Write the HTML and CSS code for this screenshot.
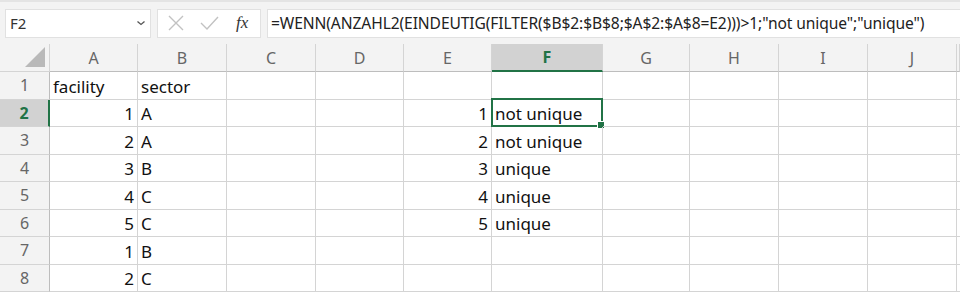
FILE: index.html
```html
<!DOCTYPE html>
<html lang="de">
<head>
  <meta charset="UTF-8">
  <title>Tabelle</title>
  <link rel="stylesheet" href="styles.css">
</head>
<body>

  <div class="toolbar">
    <div class="namebox">
      <span>F2</span>
      <svg class="chevron" width="10" height="6" viewBox="0 0 10 6"><path d="M1.5 1.5 L5 4.5 L8.5 1.5" fill="none" stroke="#555" stroke-width="1.3"/></svg>
    </div>
    <div class="actions">
      <svg width="18" height="18" viewBox="0 0 18 18"><path d="M2 2 L16 16 M16 2 L2 16" stroke="#c2c2c2" stroke-width="1.4"/></svg>
      <svg width="20" height="18" viewBox="0 0 20 18"><path d="M2 9 L8 15 L19 3" fill="none" stroke="#c2c2c2" stroke-width="1.4"/></svg>
      <span class="fx">fx</span>
    </div>
    <div class="formula">=WENN(ANZAHL2(EINDEUTIG(FILTER($B$2:$B$8;$A$2:$A$8=E2)))&gt;1;"not unique";"unique")</div>
  </div>

  <div class="sheet" id="sheet"></div>

  <script>
    const sheet = document.getElementById('sheet');
    const spalten = ['A', 'B', 'C', 'D', 'E', 'F', 'G', 'H', 'I', 'J', ''];

    // Zellinhalte: [Zeile][Spalte] = [Text, rechtsbündig?]
    const daten = {
      1: { A: ['facility'], B: ['sector'] },
      2: { A: ['1', true], B: ['A'], E: ['1', true], F: ['not unique'] },
      3: { A: ['2', true], B: ['A'], E: ['2', true], F: ['not unique'] },
      4: { A: ['3', true], B: ['B'], E: ['3', true], F: ['unique'] },
      5: { A: ['4', true], B: ['C'], E: ['4', true], F: ['unique'] },
      6: { A: ['5', true], B: ['C'], E: ['5', true], F: ['unique'] },
      7: { A: ['1', true], B: ['B'] },
      8: { A: ['2', true], B: ['C'] }
    };

    function zelle(klasse, text) {
      const d = document.createElement('div');
      d.className = klasse;
      if (text) d.textContent = text;
      sheet.appendChild(d);
      return d;
    }

    // Kopfzeile
    zelle('corner');
    spalten.forEach(s => zelle(s === 'F' ? 'colhead aktiv' : 'colhead', s));

    for (let r = 1; r <= 8; r++) {
      zelle(r === 2 ? 'rowhead aktiv' : 'rowhead', String(r));
      spalten.forEach(s => {
        const wert = daten[r] && daten[r][s];
        let klasse = 'cell';
        if (wert && wert[1]) klasse += ' zahl';
        const d = zelle(klasse, wert ? wert[0] : '');
        if (r === 2 && s === 'F') {
          const rahmen = document.createElement('div');
          rahmen.className = 'auswahl';
          d.appendChild(rahmen);
        }
      });
    }
  </script>
</body>
</html>
```

FILE: styles.css
```css
body {
  margin: 0;
  background-color: #ffffff;
  font-family: 'Noto Sans', sans-serif;
  overflow: hidden;
}

.toolbar {
  display: flex;
  align-items: center;
  gap: 6px;
  height: 44px;
  padding: 0 0 0 5px;
  background-color: #f3f3f3;
  border-top: 2px solid #e4e4e4;
  box-sizing: border-box;
}

.namebox {
  display: flex;
  align-items: center;
  justify-content: space-between;
  width: 146px;
  height: 29px;
  padding: 0 4px 0 4px;
  background-color: #ffffff;
  border: 1px solid #e1e1e1;
  box-sizing: border-box;
  font-size: 15px;
  color: #333;
}

.actions {
  display: flex;
  align-items: center;
  gap: 14px;
  width: 104px;
  height: 29px;
  padding: 0 10px 0 9px;
  background-color: #ffffff;
  border: 1px solid #e1e1e1;
  box-sizing: border-box;
}

.fx {
  margin-left: 3px;
  font-family: 'Liberation Serif', serif;
  font-style: italic;
  font-size: 17px;
  color: #333;
}

.formula {
  flex: 1;
  height: 29px;
  line-height: 27px;
  padding-left: 3px;
  background-color: #ffffff;
  border: 1px solid #e1e1e1;
  border-right: none;
  box-sizing: border-box;
  font-size: 15.6px;
  color: #222;
  white-space: nowrap;
  letter-spacing: -0.1px;
}

.sheet {
  display: grid;
  grid-template-columns: 50px 88px 89px 89px 88px 88px 111px 87px 89px 89px 89px 3px;
  grid-template-rows: 28px repeat(8, 27.5px);
}

.corner,
.colhead,
.rowhead {
  background-color: #f3f3f3;
  color: #666;
  font-size: 16px;
  box-sizing: border-box;
}

.corner {
  position: relative;
  border-right: 1px solid #d4d4d4;
  border-bottom: 1px solid #d4d4d4;
}

.corner::after {
  content: '';
  position: absolute;
  right: 4px;
  bottom: 4px;
  border-left: 20px solid transparent;
  border-bottom: 20px solid #b9b9b9;
}

.colhead {
  display: flex;
  align-items: center;
  justify-content: center;
  border-right: 1px solid #d4d4d4;
  border-bottom: 1px solid #bdbdbd;
}

.colhead.aktiv {
  background-color: #d2d2d2;
  color: #217346;
  font-weight: bold;
  border-bottom: 2px solid #217346;
}

.rowhead {
  display: flex;
  align-items: center;
  justify-content: center;
  border-right: 1px solid #bdbdbd;
  border-bottom: 1px solid #d4d4d4;
}

.rowhead.aktiv {
  background-color: #d2d2d2;
  color: #217346;
  font-weight: bold;
  border-right: 2px solid #217346;
}

.cell {
  position: relative;
  display: flex;
  align-items: flex-end;
  padding: 0 3px 0 3px;
  border-right: 1px solid #d4d4d4;
  border-bottom: 1px solid #d4d4d4;
  box-sizing: border-box;
  font-size: 17px;
  line-height: 25px;
  color: #111;
  white-space: nowrap;
}

.cell.zahl {
  justify-content: flex-end;
}

.auswahl {
  position: absolute;
  left: -1px;
  top: -2px;
  right: -1px;
  bottom: -1px;
  border: 2px solid #217346;
}

.auswahl::after {
  content: '';
  position: absolute;
  right: -4px;
  bottom: -4px;
  width: 6px;
  height: 6px;
  background-color: #217346;
  border: 1px solid #ffffff;
}
```
